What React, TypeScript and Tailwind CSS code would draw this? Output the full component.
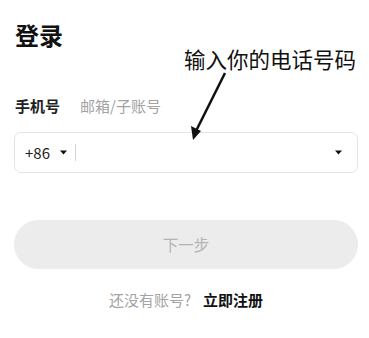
import { useState } from 'react'

function Caret() {
  return (
    <svg width="7" height="5" viewBox="0 0 7 5" className="shrink-0">
      <path d="M0 0.5h7L3.5 4.5z" fill="#111" />
    </svg>
  )
}

export default function App() {
  const [tab, setTab] = useState<'phone' | 'email'>('phone')
  const [phone, setPhone] = useState('')

  return (
    <div
      className="relative h-[338px] w-[369px] overflow-hidden bg-white px-[14px] pt-[20px]"
      style={{ fontFamily: '"Noto Sans CJK SC", "Noto Sans", sans-serif' }}
    >
      <h1 className="pl-px text-[24px] font-bold leading-[30px] text-[#111]">登录</h1>

      <div className="mt-[46px] flex items-center gap-[20px] pl-px text-[15px] leading-[20px]">
        <button
          type="button"
          onClick={() => setTab('phone')}
          className={tab === 'phone' ? 'font-bold text-[#222]' : 'text-[#a3a3a3]'}
        >
          手机号
        </button>
        <button
          type="button"
          onClick={() => setTab('email')}
          className={tab === 'email' ? 'font-bold text-[#222]' : 'text-[#a3a3a3]'}
        >
          邮箱/子账号
        </button>
      </div>

      <div className="mt-[16px] flex h-[41px] w-[344px] items-center rounded-[7px] border border-[#e4e4e4] pl-[10px] pr-[15px]">
        <span className="text-[15px] leading-[20px] text-[#222]">+86</span>
        <span className="ml-[10px]">
          <Caret />
        </span>
        <span className="ml-[8px] h-[17px] w-px bg-[#d6d6d6]" />
        <input
          value={phone}
          onChange={(e) => setPhone(e.target.value)}
          className="min-w-0 flex-1 bg-transparent px-2 text-[15px] outline-none"
        />
        <Caret />
      </div>

      <button
        type="button"
        className="mt-[47px] flex h-[49px] w-[344px] items-center justify-center rounded-full bg-[#ececec] text-[15.5px] text-[#b3b3b3]"
      >
        下一步
      </button>

      <p className="mt-[21px] w-[344px] text-center text-[15px] leading-[20px] text-[#a3a3a3]">
        还没有账号?
        <span className="ml-[12px] font-bold text-[#111]">立即注册</span>
      </p>

      {/* annotation drawn over the screenshot */}
      <span className="absolute left-[184px] top-[46px] text-[21.5px] leading-[26px] text-[#111]">
        输入你的电话号码
      </span>
      <svg
        className="absolute left-[186px] top-[70px]"
        width="46"
        height="76"
        viewBox="0 0 46 76"
      >
        <path d="M39 3L9 63" stroke="#111" strokeWidth="2.5" fill="none" />
        <path d="M7 70L5 56L15 61z" fill="#111" />
      </svg>
    </div>
  )
}
